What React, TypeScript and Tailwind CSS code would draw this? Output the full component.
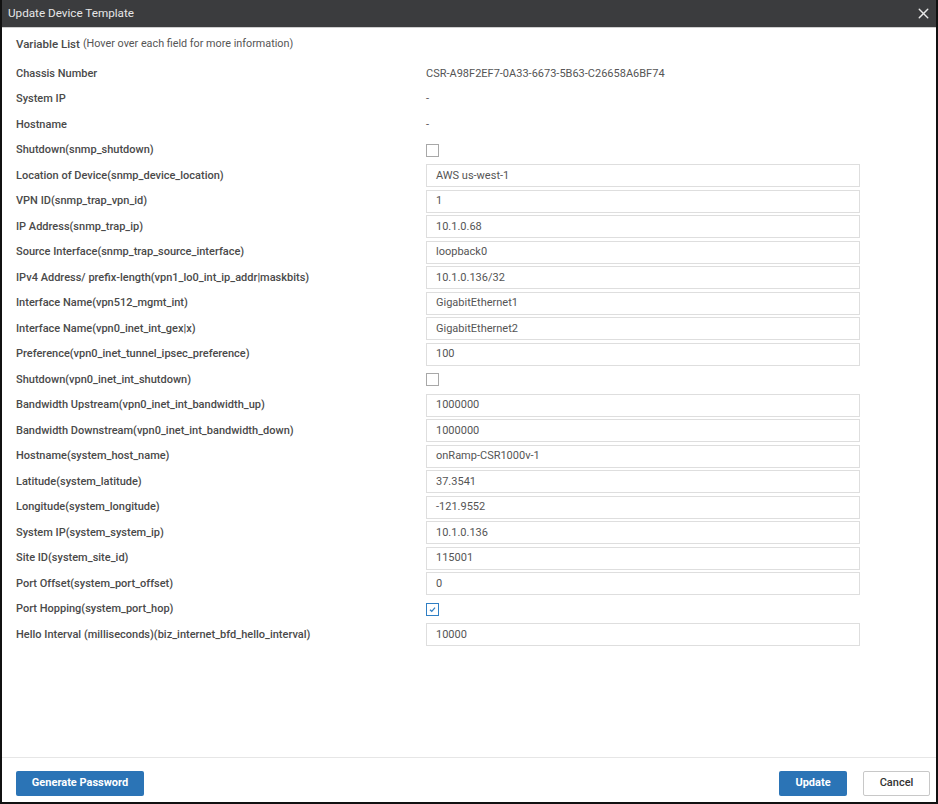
import React from 'react';
import { X } from 'lucide-react';

type Row =
  | { label: string; kind: 'text'; value: string }
  | { label: string; kind: 'input'; value: string }
  | { label: string; kind: 'check'; checked: boolean };

const rows: Row[] = [
  { label: 'Chassis Number', kind: 'text', value: 'CSR-A98F2EF7-0A33-6673-5B63-C26658A6BF74' },
  { label: 'System IP', kind: 'text', value: '-' },
  { label: 'Hostname', kind: 'text', value: '-' },
  { label: 'Shutdown(snmp_shutdown)', kind: 'check', checked: false },
  { label: 'Location of Device(snmp_device_location)', kind: 'input', value: 'AWS us-west-1' },
  { label: 'VPN ID(snmp_trap_vpn_id)', kind: 'input', value: '1' },
  { label: 'IP Address(snmp_trap_ip)', kind: 'input', value: '10.1.0.68' },
  { label: 'Source Interface(snmp_trap_source_interface)', kind: 'input', value: 'loopback0' },
  { label: 'IPv4 Address/ prefix-length(vpn1_lo0_int_ip_addr|maskbits)', kind: 'input', value: '10.1.0.136/32' },
  { label: 'Interface Name(vpn512_mgmt_int)', kind: 'input', value: 'GigabitEthernet1' },
  { label: 'Interface Name(vpn0_inet_int_gex|x)', kind: 'input', value: 'GigabitEthernet2' },
  { label: 'Preference(vpn0_inet_tunnel_ipsec_preference)', kind: 'input', value: '100' },
  { label: 'Shutdown(vpn0_inet_int_shutdown)', kind: 'check', checked: false },
  { label: 'Bandwidth Upstream(vpn0_inet_int_bandwidth_up)', kind: 'input', value: '1000000' },
  { label: 'Bandwidth Downstream(vpn0_inet_int_bandwidth_down)', kind: 'input', value: '1000000' },
  { label: 'Hostname(system_host_name)', kind: 'input', value: 'onRamp-CSR1000v-1' },
  { label: 'Latitude(system_latitude)', kind: 'input', value: '37.3541' },
  { label: 'Longitude(system_longitude)', kind: 'input', value: '-121.9552' },
  { label: 'System IP(system_system_ip)', kind: 'input', value: '10.1.0.136' },
  { label: 'Site ID(system_site_id)', kind: 'input', value: '115001' },
  { label: 'Port Offset(system_port_offset)', kind: 'input', value: '0' },
  { label: 'Port Hopping(system_port_hop)', kind: 'check', checked: true },
  { label: 'Hello Interval (milliseconds)(biz_internet_bfd_hello_interval)', kind: 'input', value: '10000' },
];

const Checkbox: React.FC<{ checked: boolean }> = ({ checked }) =>
  checked ? (
    <span className="flex h-[13px] w-[13px] items-center justify-center border border-[#2f7fc4] bg-white">
      <svg width="9" height="9" viewBox="0 0 10 10">
        <path d="M2.2 5.2 L4.2 7 L7.8 3" fill="none" stroke="#2f7fc4" strokeWidth="1.4" />
      </svg>
    </span>
  ) : (
    <span className="block h-[13px] w-[13px] border border-[#a8a8a8] bg-white" />
  );

export default function App() {
  return (
    <div
      className="flex h-[804px] w-[938px] flex-col border-x-2 border-b-2 border-[#111] bg-white text-[11px]"
      style={{ fontFamily: 'Roboto, "Liberation Sans", sans-serif' }}
    >
      <div className="flex h-[28px] shrink-0 items-center justify-between border-b border-[#cfcfcf] bg-[#3b3c3e] pl-[6px] pr-[4px]">
        <span className="pt-[1px] text-[11.7px] text-[#e6e6e6]">Update Device Template</span>
        <X size={17} strokeWidth={2} className="text-[#e8e8e8]" />
      </div>

      <div className="flex-1 pl-[14px]">
        <div className="flex h-[33px] items-center text-[#4a4a4a]">
          <span className="font-medium text-[11.5px]">Variable List</span>
          <span className="ml-[3px] text-[10.8px] text-[#555]">(Hover over each field for more information)</span>
        </div>

        {rows.map((r, i) => (
          <div key={i} className="flex h-[25.5px] items-center">
            <div className="w-[410px] shrink-0 font-medium text-[#4a4a4a]">{r.label}</div>
            {r.kind === 'text' && <div className="text-[#555]">{r.value}</div>}
            {r.kind === 'check' && <Checkbox checked={r.checked} />}
            {r.kind === 'input' && (
              <div className="flex h-[23px] w-[434px] items-center border border-[#dedede] bg-white px-[9px] text-[#555]">
                {r.value}
              </div>
            )}
          </div>
        ))}
      </div>

      <div className="flex h-[45px] shrink-0 items-start justify-between border-t border-[#e6e6e6] pl-[14px] pr-[6px] pt-[13px]">
        <button className="h-[25px] w-[128px] rounded-[2px] bg-[#2b74b6] text-[11px] font-bold text-white">
          Generate Password
        </button>
        <div className="flex items-center gap-[16px]">
          <button className="h-[25px] w-[68px] rounded-[2px] bg-[#2b74b6] text-[11px] font-bold text-white">
            Update
          </button>
          <button className="h-[25px] w-[67px] rounded-[2px] border border-[#c8c8c8] bg-white text-[11px] font-medium text-[#333]">
            Cancel
          </button>
        </div>
      </div>
    </div>
  );
}
